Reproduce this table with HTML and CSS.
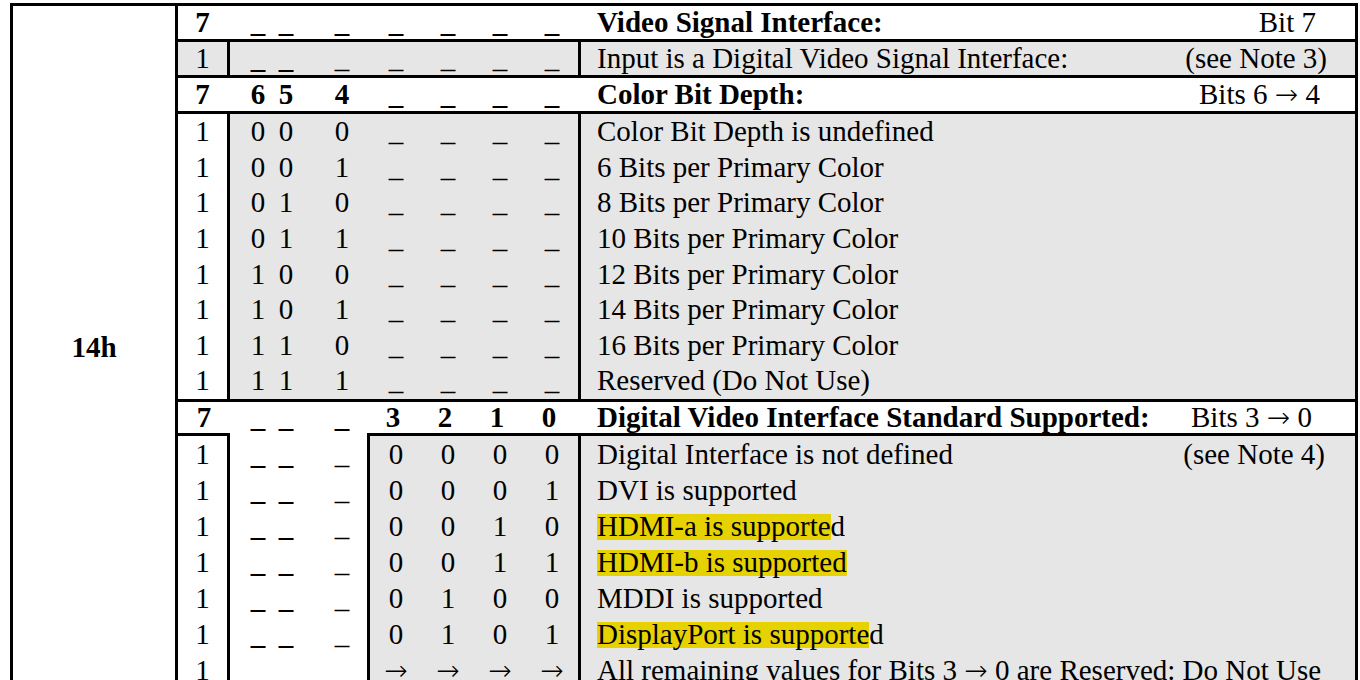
FILE: index.html
```html
<!DOCTYPE html>
<html>
<head>
<meta charset="utf-8">
<title>EDID Byte 14h</title>
<link rel="stylesheet" href="styles.css">
</head>
<body>
<div class="tbl">
  <div class="addr">14h</div>
  <div class="rows">
    <div class="row hdr">
      <div class="c7">7</div>
      <div class="bits">
        <div class="hi"><span class="b6">_</span><span class="b5">_</span><span class="b4">_</span></div>
        <div class="lo"><span>_</span><span>_</span><span>_</span><span>_</span></div>
      </div>
      <div class="desc"><span>Video Signal Interface:</span><span class="note n1">Bit 7</span></div>
    </div>
    <div class="row g1">
      <div class="c7">1</div>
      <div class="bits">
        <div class="hi"><span class="b6 ub">_</span><span class="b5 ub">_</span><span class="b4">_</span></div>
        <div class="lo"><span>_</span><span>_</span><span>_</span><span>_</span></div>
      </div>
      <div class="desc"><span>Input is a Digital Video Signal Interface:</span><span class="note n3">(see Note 3)</span></div>
    </div>
    <div class="row hdr">
      <div class="c7">7</div>
      <div class="bits">
        <div class="hi"><span class="b6">6</span><span class="b5">5</span><span class="b4">4</span></div>
        <div class="lo"><span>_</span><span>_</span><span>_</span><span>_</span></div>
      </div>
      <div class="desc"><span>Color Bit Depth:</span><span class="note n64">Bits 6 <i class="arr">&#8594;</i> 4</span></div>
    </div>

    <div class="row g2">
      <div class="c7">1</div>
      <div class="bits"><div class="hi"><span class="b6">0</span><span class="b5">0</span><span class="b4">0</span></div><div class="lo"><span>_</span><span>_</span><span>_</span><span>_</span></div></div>
      <div class="desc"><span>Color Bit Depth is undefined</span></div>
    </div>
    <div class="row g2">
      <div class="c7">1</div>
      <div class="bits"><div class="hi"><span class="b6">0</span><span class="b5">0</span><span class="b4">1</span></div><div class="lo"><span>_</span><span>_</span><span>_</span><span>_</span></div></div>
      <div class="desc"><span>6 Bits per Primary Color</span></div>
    </div>
    <div class="row g2">
      <div class="c7">1</div>
      <div class="bits"><div class="hi"><span class="b6">0</span><span class="b5">1</span><span class="b4">0</span></div><div class="lo"><span>_</span><span>_</span><span>_</span><span>_</span></div></div>
      <div class="desc"><span>8 Bits per Primary Color</span></div>
    </div>
    <div class="row g2">
      <div class="c7">1</div>
      <div class="bits"><div class="hi"><span class="b6">0</span><span class="b5">1</span><span class="b4">1</span></div><div class="lo"><span>_</span><span>_</span><span>_</span><span>_</span></div></div>
      <div class="desc"><span>10 Bits per Primary Color</span></div>
    </div>
    <div class="row g2">
      <div class="c7">1</div>
      <div class="bits"><div class="hi"><span class="b6">1</span><span class="b5">0</span><span class="b4">0</span></div><div class="lo"><span>_</span><span>_</span><span>_</span><span>_</span></div></div>
      <div class="desc"><span>12 Bits per Primary Color</span></div>
    </div>
    <div class="row g2">
      <div class="c7">1</div>
      <div class="bits"><div class="hi"><span class="b6">1</span><span class="b5">0</span><span class="b4">1</span></div><div class="lo"><span>_</span><span>_</span><span>_</span><span>_</span></div></div>
      <div class="desc"><span>14 Bits per Primary Color</span></div>
    </div>
    <div class="row g2">
      <div class="c7">1</div>
      <div class="bits"><div class="hi"><span class="b6">1</span><span class="b5">1</span><span class="b4">0</span></div><div class="lo"><span>_</span><span>_</span><span>_</span><span>_</span></div></div>
      <div class="desc"><span>16 Bits per Primary Color</span></div>
    </div>
    <div class="row g2">
      <div class="c7">1</div>
      <div class="bits"><div class="hi"><span class="b6">1</span><span class="b5">1</span><span class="b4">1</span></div><div class="lo"><span>_</span><span>_</span><span>_</span><span>_</span></div></div>
      <div class="desc"><span>Reserved (Do Not Use)</span></div>
    </div>

    <div class="row split">
      <div class="c7">7</div>
      <div class="bits">
        <div class="hi"><span class="b6">_</span><span class="b5">_</span><span class="b4">_</span></div>
        <div class="lo"><span>3</span><span>2</span><span>1</span><span>0</span></div>
      </div>
      <div class="desc"><span>Digital Video Interface Standard Supported:</span><span class="note n30">Bits 3 <i class="arr">&#8594;</i> 0</span></div>
    </div>

    <div class="row g3">
      <div class="c7">1</div>
      <div class="bits"><div class="hi"><span class="b6 ub">_</span><span class="b5 ub">_</span><span class="b4">_</span></div><div class="lo"><span>0</span><span>0</span><span>0</span><span>0</span></div></div>
      <div class="desc"><span>Digital Interface is not defined</span><span class="note n4">(see Note 4)</span></div>
    </div>
    <div class="row g3">
      <div class="c7">1</div>
      <div class="bits"><div class="hi"><span class="b6 ub">_</span><span class="b5 ub">_</span><span class="b4">_</span></div><div class="lo"><span>0</span><span>0</span><span>0</span><span>1</span></div></div>
      <div class="desc"><span>DVI is supported</span></div>
    </div>
    <div class="row g3">
      <div class="c7">1</div>
      <div class="bits"><div class="hi"><span class="b6 ub">_</span><span class="b5 ub">_</span><span class="b4">_</span></div><div class="lo"><span>0</span><span>0</span><span>1</span><span>0</span></div></div>
      <div class="desc"><span><span class="mark">HDMI-a is supporte</span>d</span></div>
    </div>
    <div class="row g3">
      <div class="c7">1</div>
      <div class="bits"><div class="hi"><span class="b6 ub">_</span><span class="b5 ub">_</span><span class="b4">_</span></div><div class="lo"><span>0</span><span>0</span><span>1</span><span>1</span></div></div>
      <div class="desc"><span><span class="mark">HDMI-b is supported</span></span></div>
    </div>
    <div class="row g3">
      <div class="c7">1</div>
      <div class="bits"><div class="hi"><span class="b6 ub">_</span><span class="b5 ub">_</span><span class="b4">_</span></div><div class="lo"><span>0</span><span>1</span><span>0</span><span>0</span></div></div>
      <div class="desc"><span>MDDI is supported</span></div>
    </div>
    <div class="row g3">
      <div class="c7">1</div>
      <div class="bits"><div class="hi"><span class="b6 ub">_</span><span class="b5 ub">_</span><span class="b4">_</span></div><div class="lo"><span>0</span><span>1</span><span>0</span><span>1</span></div></div>
      <div class="desc"><span><span class="mark">DisplayPort is supporte</span>d</span></div>
    </div>
    <div class="row g3">
      <div class="c7">1</div>
      <div class="bits"><div class="hi"></div><div class="lo"><span><i class="arr">&#8594;</i></span><span><i class="arr">&#8594;</i></span><span><i class="arr">&#8594;</i></span><span><i class="arr">&#8594;</i></span></div></div>
      <div class="desc"><span>All remaining values for Bits 3 <i class="arr">&#8594;</i> 0 are Reserved: Do Not Use</span></div>
    </div>
  </div>
</div>
</body>
</html>
```

FILE: styles.css
```css
html, body {
  margin: 0;
  padding: 0;
  background: #ffffff;
  overflow: hidden;
}

body {
  font-family: "Liberation Serif", "Times New Roman", serif;
  font-size: 29px;
  color: #000000;
}

.tbl {
  display: flex;
  width: 1342px;
  margin: 3px 0 0 10px;
  border: 3px solid #000000;
}

.addr {
  width: 162px;
  border-right: 3px solid #000000;
  display: flex;
  align-items: center;
  justify-content: center;
  font-weight: bold;
}

.rows {
  flex: 1;
  display: flex;
  flex-direction: column;
}

.row {
  display: flex;
  white-space: nowrap;
}

.c7 {
  width: 49px;
  border-right: 3px solid #000000;
  text-align: center;
}

.bits {
  width: 348px;
  display: flex;
}

.hi {
  width: 137px;
  display: grid;
  grid-template-columns: 14px 28px 28px 28px 28px 11px;
}

.hi span,
.lo span {
  text-align: center;
}

.b6 { grid-column: 2; }
.b5 { grid-column: 3; }
.b4 { grid-column: 5; }

.ub { font-weight: bold; }

.arr {
  font-family: "DejaVu Sans ExtraLight", "DejaVu Sans", sans-serif;
  font-style: normal;
  font-weight: 200;
  font-size: 28px;
  line-height: 0;
}

.lo {
  width: 208px;
  border-left: 3px solid transparent;
  display: grid;
  grid-template-columns: repeat(4, 52px);
}

.desc {
  flex: 1;
  border-left: 3px solid #000000;
  padding-left: 16px;
  display: flex;
}

.note {
  margin-left: auto;
  font-weight: normal;
}

.n1 { margin-right: 39px; }
.n3 { margin-right: 28px; }
.n64 { margin-right: 35px; }
.n30 { margin-right: 43px; }
.n4 { margin-right: 30px; }

.mark {
  background: linear-gradient(#e6d200, #e6d200) 0 4px / 100% 26px no-repeat;
}

/* white header rows */
.hdr {
  line-height: 33px;
  border-bottom: 3px solid #000000;
  font-weight: bold;
}

.hdr .c7,
.hdr .desc {
  border-color: transparent;
}

/* grey single row */
.g1 {
  line-height: 33px;
  border-bottom: 3px solid #000000;
  background: #e6e6e6;
}

/* color bit depth rows */
.g2 {
  line-height: 35.625px;
}

.g2 .bits,
.g2 .desc {
  background: #e6e6e6;
}

/* header with partial bottom rule */
.split {
  line-height: 31px;
  border-top: 3px solid #000000;
  font-weight: bold;
}

.split .c7 {
  width: 52px;
  border-right: 0;
  border-bottom: 3px solid #000000;
}

.split .hi {
  border-bottom: 3px solid transparent;
}

.split .lo {
  width: 211px;
  border-left: 0;
  border-bottom: 3px solid #000000;
}

.split .desc {
  border-left: 0;
  padding-left: 19px;
  border-bottom: 3px solid #000000;
}

/* digital interface rows */
.g3 {
  line-height: 36px;
}

.g3 .lo {
  border-left-color: #000000;
  background: #e6e6e6;
}

.g3 .desc {
  background: #e6e6e6;
}
```
